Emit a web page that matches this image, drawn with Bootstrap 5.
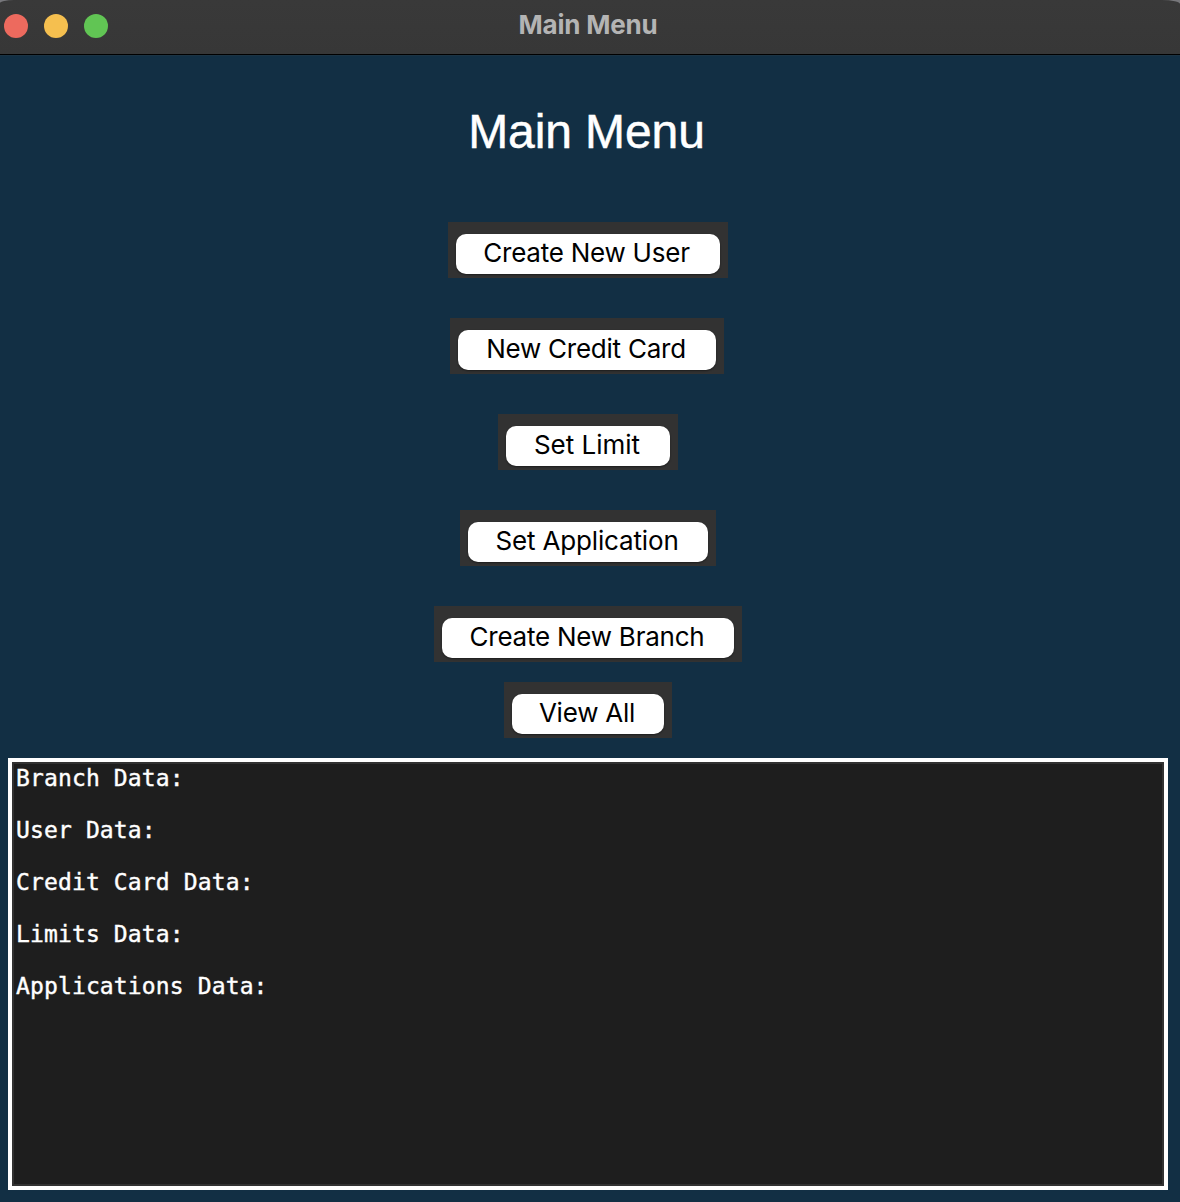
<!DOCTYPE html>
<html lang="en">
<head>
<meta charset="utf-8">
<meta name="viewport" content="width=device-width, initial-scale=1">
<title>Main Menu</title>
<link href="https://cdn.jsdelivr.net/npm/bootstrap@5.3.0/dist/css/bootstrap.min.css" rel="stylesheet">
<style>
body{background:#122f44;height:1202px;overflow:hidden}
.titlebar{height:55px;background:linear-gradient(#393939,#373737);border-bottom:1px solid #000;box-shadow:0 1px 0 #1b3343;border-radius:0}
.corner-wrap{background:#77777b}
.corner-wrap .titlebar{border-radius:14px 18px 0 0/3px 4px 0 0}
.lights{left:4px;top:14px;gap:16px}
.light{width:24px;height:24px;border-radius:50%}
.red{background:#ed6a5e}.yellow{background:#f5bf4f}.green{background:#61c554}
.win-title{font:700 26px/50px Inter,sans-serif;color:#b4b4b4;letter-spacing:-.2px;padding-right:4px}
.content{padding:0 12px 12px 8px;height:1147px}
.heading{font:400 48px/56px "Liberation Sans",sans-serif;color:#fff;margin:49px 3px 62px 0;letter-spacing:-.1px;-webkit-text-stroke:.5px #fff}
.btn-frame{background:#323232;height:56px;padding:12px 8px 4px;margin-bottom:40px}
.menu-btn{height:40px;border-radius:10px;background:#fff;color:#000;font:400 26px/38px Inter,sans-serif;letter-spacing:-.24px;padding:0 2px 2px 0;line-height:36px;border:0;box-shadow:0 1px 2px rgba(0,0,0,.45);white-space:nowrap}
.menu-btn:hover{background:#fff;color:#000}
.w-user{width:280px}.w-card{width:274px;margin-right:2px}.w-limit{width:180px}.w-app{width:256px}.w-branch{width:308px;margin-bottom:20px}.w-view{width:168px;margin-bottom:20px}
.w-limit .menu-btn{letter-spacing:0}
.w-app .menu-btn{letter-spacing:-.15px}
.w-user .menu-btn{padding-right:3px}
.output{border:4px solid #fff;background:#1e1e1e;box-shadow:inset 0 0 0 2px #323232;color:#fff;font:400 23px/26px "DejaVu Sans Mono",monospace;letter-spacing:.13px;-webkit-text-stroke:.4px #fff;padding:3px 4px;height:432px}
</style>
<script src="https://cdn.jsdelivr.net/npm/bootstrap@5.3.0/dist/js/bootstrap.bundle.min.js"></script>
</head>
<body>
<div class="corner-wrap">
<header class="titlebar position-relative text-center">
<div class="lights position-absolute d-flex"><span class="light red"></span><span class="light yellow"></span><span class="light green"></span></div>
<div class="win-title">Main Menu</div>
</header>
</div>
<main class="content d-flex flex-column align-items-center">
<h1 class="heading">Main Menu</h1>
<div class="btn-frame w-user"><button class="btn menu-btn w-100 d-block">Create New User</button></div>
<div class="btn-frame w-card"><button class="btn menu-btn w-100 d-block">New Credit Card</button></div>
<div class="btn-frame w-limit"><button class="btn menu-btn w-100 d-block">Set Limit</button></div>
<div class="btn-frame w-app"><button class="btn menu-btn w-100 d-block">Set Application</button></div>
<div class="btn-frame w-branch"><button class="btn menu-btn w-100 d-block">Create New Branch</button></div>
<div class="btn-frame w-view"><button class="btn menu-btn w-100 d-block">View All</button></div>
<pre class="output w-100 m-0">Branch Data:

User Data:

Credit Card Data:

Limits Data:

Applications Data:
</pre>
</main>
</body>
</html>
